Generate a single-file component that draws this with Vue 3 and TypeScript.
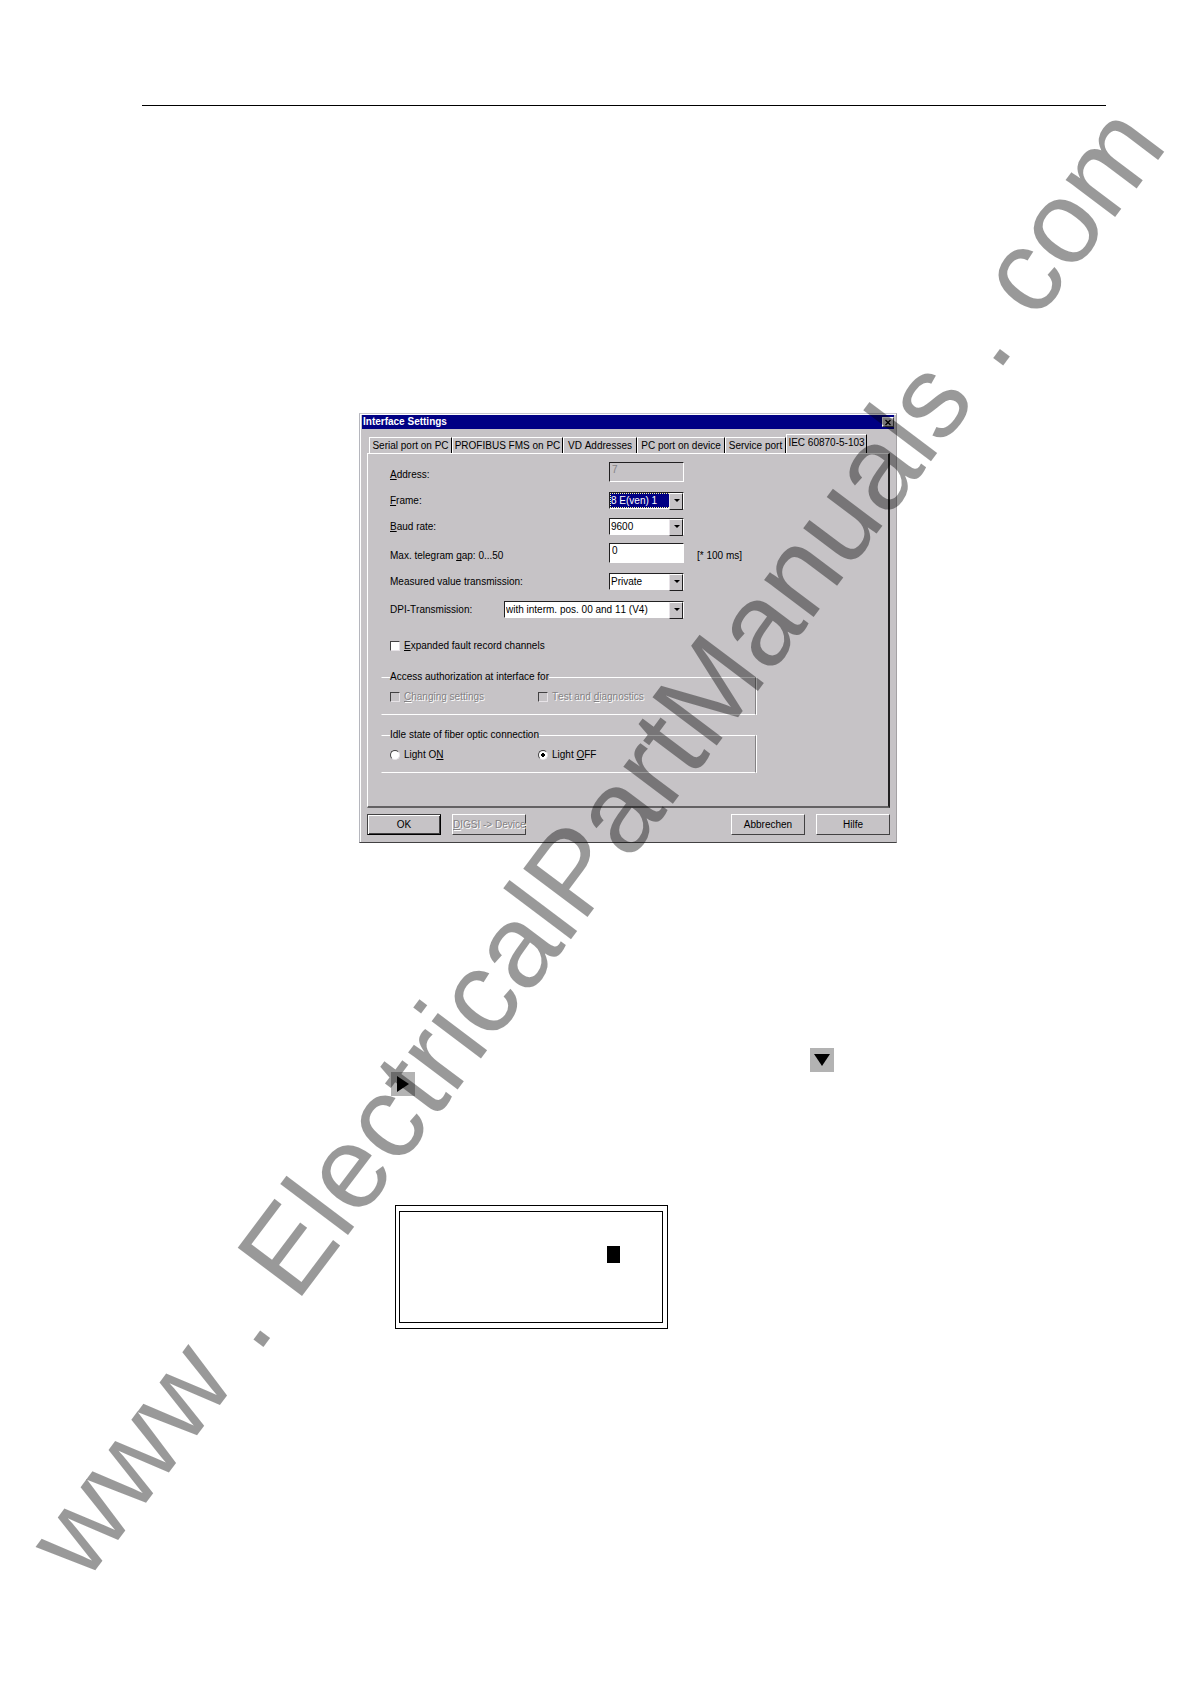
<script setup lang="ts">
import { ref } from 'vue'

interface Tab {
  id: string
  label: string
}

const tabs: Tab[] = [
  { id: 'serial', label: 'Serial port on PC' },
  { id: 'profibus', label: 'PROFIBUS FMS on PC' },
  { id: 'vd', label: 'VD Addresses' },
  { id: 'pcport', label: 'PC port on device' },
  { id: 'service', label: 'Service port' },
  { id: 'iec', label: 'IEC 60870-5-103' },
]

const activeTab = ref('iec')
const address = ref('7')
const frame = ref('8 E(ven) 1')
const baud = ref('9600')
const gap = ref('0')
const transmission = ref('Private')
const dpi = ref('with interm. pos. 00 and 11 (V4)')
const expanded = ref(false)
const light = ref('off')
</script>

<template>
  <div class="page">
    <hr class="rule" />

    <section class="dialog" role="dialog" aria-labelledby="dialog-title">
      <header class="titlebar">
        <h1 id="dialog-title">Interface Settings</h1>
        <button class="close" type="button" aria-label="Close">
          <svg viewBox="0 0 8 7" width="8" height="7"><path d="M1.5 1 L6.5 6 M6.5 1 L1.5 6" stroke="#000" stroke-width="1.3" /></svg>
        </button>
      </header>

      <nav class="tabs" role="tablist">
        <button
          v-for="tab in tabs"
          :key="tab.id"
          type="button"
          role="tab"
          class="tab"
          :class="{ active: tab.id === activeTab }"
          :aria-selected="tab.id === activeTab"
          @click="activeTab = tab.id"
        >{{ tab.label }}</button>
      </nav>

      <form class="panel" @submit.prevent>
        <div class="fields">
          <label class="tall" for="address"><u>A</u>ddress:</label>
          <input id="address" v-model="address" class="box" type="text" disabled />

          <label for="frame"><u>F</u>rame:</label>
          <span class="combo focused">
            <select id="frame" v-model="frame"><option>8 E(ven) 1</option></select>
          </span>

          <label for="baud"><u>B</u>aud rate:</label>
          <span class="combo">
            <select id="baud" v-model="baud"><option>9600</option></select>
          </span>

          <label class="tall" for="gap">Max. telegram <u>g</u>ap: 0...50</label>
          <input id="gap" v-model="gap" class="box" type="text" />
          <span class="unit">[* 100 ms]</span>

          <label for="transmission">Measured value transmission:</label>
          <span class="combo">
            <select id="transmission" v-model="transmission"><option>Private</option></select>
          </span>

          <label class="short" for="dpi">DPI-Transmission:</label>
          <span class="combo wide">
            <select id="dpi" v-model="dpi"><option>with interm. pos. 00 and 11 (V4)</option></select>
          </span>
        </div>

        <label class="option expanded">
          <input v-model="expanded" type="checkbox" />
          <span><u>E</u>xpanded fault record channels</span>
        </label>

        <fieldset>
          <legend>Access authorization at interface for</legend>
          <div class="pair">
            <label class="option disabled">
              <input type="checkbox" disabled />
              <span><u>C</u>hanging settings</span>
            </label>
            <label class="option disabled">
              <input type="checkbox" disabled />
              <span>Test and <u>d</u>iagnostics</span>
            </label>
          </div>
        </fieldset>

        <fieldset>
          <legend>Idle state of fiber optic connection</legend>
          <div class="pair">
            <label class="option">
              <input v-model="light" type="radio" name="light" value="on" />
              <span>Light O<u>N</u></span>
            </label>
            <label class="option">
              <input v-model="light" type="radio" name="light" value="off" />
              <span>Light <u>O</u>FF</span>
            </label>
          </div>
        </fieldset>
      </form>

      <footer class="actions">
        <button class="push default" type="button">OK</button>
        <button class="push" type="button" disabled><u>D</u>IGSI -&gt; Device</button>
        <button class="push cancel" type="button">Abbrechen</button>
        <button class="push" type="button">Hilfe</button>
      </footer>
    </section>

    <div class="keys">
      <svg class="key down" viewBox="0 0 24 24" role="img" aria-label="Down key">
        <rect width="24" height="24" fill="#b3b3b3" />
        <path d="M4 6 H20 L12 18 Z" />
      </svg>
      <svg class="key right" viewBox="0 0 24 24" role="img" aria-label="Right key">
        <rect width="24" height="24" fill="#b3b3b3" />
        <path d="M6 4 V20 L18 12 Z" />
      </svg>
    </div>

    <div class="display">
      <div class="screen"><span class="cursor"></span></div>
    </div>

    <svg class="watermark" viewBox="0 0 1190 1682">
      <text transform="translate(85 1584) rotate(-53)">www . ElectricalPartManuals . com</text>
    </svg>
  </div>
</template>

<style>
body {
  margin: 0;
  background: #fff;
}
</style>

<style scoped>
.page {
  position: relative;
  box-sizing: border-box;
  min-height: 100vh;
  padding: 105px 84px 0 142px;
  overflow: hidden;
  font: 10px/12px "Liberation Sans", Arial, sans-serif;
  font-kerning: none;
  color: #000;
}

.page * {
  box-sizing: border-box;
}

button,
input,
select {
  margin: 0;
  font: inherit;
  font-kerning: none;
  color: inherit;
  border-radius: 0;
}

u {
  text-decoration-skip-ink: none;
}

.rule {
  height: 1px;
  margin: 0;
  border: 0;
  background: #000;
}

/* Dialog window */
.dialog {
  max-width: 538px;
  margin: 307px 0 0 217px;
  padding: 1px 1px 7px;
  background: #c6c3c6;
  border: 1px solid;
  border-color: #c6c6ce #a5a2a5 #424142 #b5b6bd;
  box-shadow: inset 1px 1px #fff;
}

.titlebar {
  display: flex;
  align-items: center;
  justify-content: space-between;
  height: 14px;
  margin: 0 1px;
  padding-left: 1px;
  background: #000084;
  color: #fff;
}

.titlebar h1 {
  margin: 0;
  font-size: 10px;
  line-height: 12px;
}

.close {
  display: grid;
  place-items: center;
  width: 12px;
  height: 10px;
  padding: 0;
  background: #c6c3c6;
  border: 1px solid;
  border-color: #fff #424142 #424142 #fff;
}

.tabs {
  display: grid;
  grid-template-columns: 83px 111px 74px 88px 61px 81px;
  align-items: end;
  height: 24px;
  margin: 0 8px;
}

.tab {
  height: 16px;
  padding: 0;
  white-space: nowrap;
  background: #c6c3c6;
  border: 1px solid;
  border-color: #fff #000 transparent #fff;
  border-bottom: 0;
}

.tab.active {
  height: 19px;
  padding-bottom: 2px;
}

.panel {
  height: 355px;
  margin: 0 5px 0 6px;
  padding: 8px 0 0 13px;
  border: 1px solid;
  border-width: 1px 2px 2px 1px;
  border-color: #fff #212021 #636163 #fff;
}

.fields {
  display: grid;
  grid-template-columns: 114px 105px 75px 1fr;
  grid-template-rows: 30px 26px 25px 30px 28px 17px;
  align-items: start;
  padding-left: 9px;
}

.fields label {
  grid-column: 1 / 3;
  line-height: 18px;
}

.fields label.tall {
  line-height: 25px;
}

.fields label.short {
  grid-column: 1;
}

.box {
  width: 100%;
  height: 20px;
  padding: 0 2px 6px;
  background: #fff;
  border: 1px solid;
  border-color: #212021 #fff #fff #212021;
}

.box:disabled {
  background: #c6c3c6;
  color: #848284;
}

.unit {
  padding-left: 13px;
  line-height: 25px;
}

.combo {
  position: relative;
  display: block;
  height: 17px;
  background: #fff;
  border: 1px solid;
  border-color: #212021 #fff #fff #212021;
}

.combo.wide {
  grid-column: 2 / 4;
}

.combo select {
  display: block;
  width: 100%;
  height: 15px;
  padding: 0 12px 0 1px;
  appearance: none;
  background: transparent;
  border: 0;
  outline: 0;
}

.combo.focused select {
  background: #000084;
  color: #fff;
  border: 1px dotted #ffff9c;
  padding-left: 0;
}

.combo::before {
  content: "";
  position: absolute;
  top: 0;
  right: 0;
  width: 12px;
  height: 15px;
  background: #c6c3c6;
  border: 1px solid;
  border-color: #fff #212021 #212021 #e7e3e7;
  pointer-events: none;
}

.combo::after {
  content: "";
  position: absolute;
  top: 6px;
  right: 3px;
  border: 3px solid transparent;
  border-top-color: #000;
  border-bottom: 0;
  pointer-events: none;
}

.option {
  display: flex;
  align-items: center;
  gap: 4px;
}

.option.expanded {
  margin: 22px 0 19px 9px;
}

.option input {
  width: 10px;
  height: 10px;
  appearance: none;
  background: #fff;
  border: 1px solid;
  border-color: #424142 #e7e3e7 #e7e3e7 #424142;
}

.option input[type="radio"] {
  border-radius: 50%;
}

.option input[type="radio"]:checked {
  background: radial-gradient(circle, #000 0 2px, #fff 2px);
}

.option input:disabled {
  background: #c6c3c6;
}

.disabled,
.push:disabled {
  color: #848284;
  text-shadow: 1px 1px #fff;
}

fieldset {
  width: 375px;
  height: 44px;
  margin: 0 0 14px;
  padding: 0 8px;
  border: 1px solid;
  border-color: #fff #848284 #fff #c6c3c6;
  box-shadow: 1px 0 #fff;
}

legend {
  padding: 0;
}

.pair {
  display: grid;
  grid-template-columns: 148px 1fr;
  padding-top: 8px;
}

.actions {
  display: flex;
  gap: 11px;
  margin: 6px 5px 0 6px;
}

.push {
  width: 74px;
  height: 21px;
  padding: 0;
  white-space: nowrap;
  background: #c6c3c6;
  border: 1px solid;
  border-color: #fff #424142 #424142 #fff;
}

.push.default {
  border-color: #424142 #000 #000 #424142;
  box-shadow: inset 1px 1px #fff, inset -1px -1px #424142;
}

.push.cancel {
  margin-left: auto;
}

/* Device keypad symbols */
.keys {
  display: grid;
  grid-template-columns: 25px 394px 24px;
  margin: 205px 0 0 249px;
}

.key {
  display: block;
  width: 24px;
  height: 24px;
}

.key.down {
  grid-area: 1 / 3;
}

.key.right {
  grid-area: 2 / 1;
}

/* Device display */
.display {
  max-width: 273px;
  margin: 109px 0 0 253px;
  padding: 5px 4px 5px 3px;
  border: 1px solid #000;
}

.screen {
  display: flex;
  justify-content: flex-end;
  height: 112px;
  padding: 34px 42px 0 0;
  border: 1px solid #000;
}

.cursor {
  width: 13px;
  height: 17px;
  background: #000;
}

.watermark {
  position: absolute;
  top: 0;
  left: 0;
  width: 100%;
  pointer-events: none;
}

.watermark text {
  font: 117px "Liberation Sans", Arial, sans-serif;
  font-kerning: none;
  fill: #000;
  fill-opacity: 0.4;
}
</style>
